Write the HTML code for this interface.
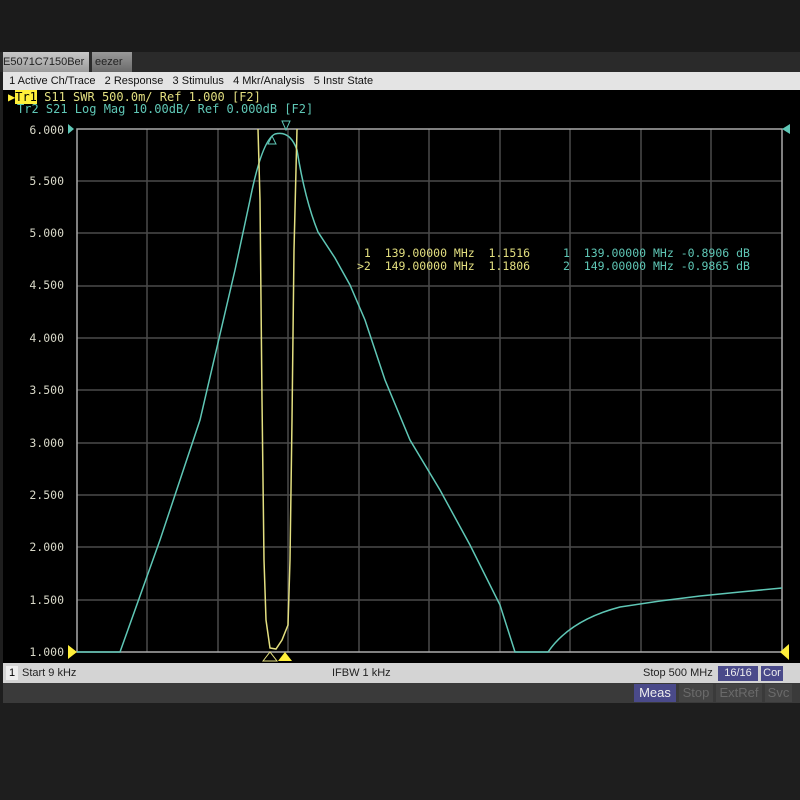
<!DOCTYPE html>
<html><head><style>
body{margin:0;width:800px;height:800px;background:#1e1e1e;overflow:hidden;font-family:"Liberation Sans",sans-serif;position:relative}
.a{position:absolute}
.mono{font-family:"DejaVu Sans Mono","Liberation Mono",monospace}
</style></head><body>
<div class="a" style="left:0;top:0;width:800px;height:52px;background:#1b1b1b"></div>
<div class="a" style="left:0;top:52px;width:800px;height:20px;background:#2a2a2a"></div>
<div class="a" style="left:3px;top:52px;width:86px;height:20px;background:linear-gradient(#c8c8c8,#9a9a9a);font-size:11px;color:#222;line-height:20px">E5071C7150Ber</div>
<div class="a" style="left:92px;top:52px;width:40px;height:20px;background:linear-gradient(#999,#6a6a6a);font-size:11px;color:#222;line-height:20px">&nbsp;eezer</div>
<div class="a" style="left:3px;top:72px;width:797px;height:18px;background:#e4e4e4;font-size:11px;color:#111;line-height:18px;white-space:pre">  1 Active Ch/Trace   2 Response   3 Stimulus   4 Mkr/Analysis   5 Instr State</div>
<div class="a" style="left:3px;top:90px;width:797px;height:573px;background:#000"></div>
<svg class="a" style="left:0;top:0" width="800" height="800">
<g stroke="#4a4a4a" stroke-width="1.5">
<line x1="147" y1="129" x2="147" y2="652"/><line x1="218" y1="129" x2="218" y2="652"/><line x1="288" y1="129" x2="288" y2="652"/><line x1="359" y1="129" x2="359" y2="652"/><line x1="429" y1="129" x2="429" y2="652"/><line x1="500" y1="129" x2="500" y2="652"/><line x1="570" y1="129" x2="570" y2="652"/><line x1="641" y1="129" x2="641" y2="652"/><line x1="711" y1="129" x2="711" y2="652"/>
<line x1="77" y1="181" x2="782" y2="181"/><line x1="77" y1="233" x2="782" y2="233"/><line x1="77" y1="286" x2="782" y2="286"/><line x1="77" y1="338" x2="782" y2="338"/><line x1="77" y1="390" x2="782" y2="390"/><line x1="77" y1="443" x2="782" y2="443"/><line x1="77" y1="495" x2="782" y2="495"/><line x1="77" y1="547" x2="782" y2="547"/><line x1="77" y1="600" x2="782" y2="600"/>
</g>
<rect x="77" y="129" width="705" height="523" fill="none" stroke="#aaa" stroke-width="1.5"/>
<path d="M77,652 L120,652 L160,540 L200,420 L235,270 L250,200 Q262,140 275,134 Q290,130 297,150 Q305,200 318,232 L335,258 L350,285 L365,320 L385,380 L410,440 L440,490 L470,545 L500,605 L515,652 L548,652 Q570,620 620,607 L660,601 L700,596 L740,592 L782,588" fill="none" stroke="#5fc7b6" stroke-width="1.5"/>
<path d="M258,129 L260,200 L262,400 L264,560 L266,620 L270,648 L276,649 L282,640 L288,625 L290,560 L292,420 L294,250 L297,129" fill="none" stroke="#e3df80" stroke-width="1.5"/>
<polygon points="68,124 74,129 68,134" fill="#5fc7b6"/>
<polygon points="68,645 77,652 68,659" fill="#ffef3a"/>
<polygon points="790,124 782,129 790,134" fill="#5fc7b6"/>
<polygon points="789,644 780,652 789,660" fill="#ffef3a"/>
<polygon points="278,661 285,652 292,661" fill="#ffef3a"/>
<polygon points="263,661 270,652 277,661" fill="none" stroke="#e3df80"/>
<polygon points="282,121 290,121 286,130" fill="none" stroke="#5fc7b6"/>
<polygon points="268,144 276,144 272,136" fill="none" stroke="#5fc7b6"/>
</svg>
<div class="a mono" style="left:8px;top:91px;font-size:12px;line-height:12px;white-space:pre"><span style="color:#ffef3a">▶</span><span style="background:#ffef3a;color:#000">Tr1</span><span style="color:#e3df80"> S11 SWR 500.0m/ Ref 1.000 [F2]</span></div>
<div class="a mono" style="left:17px;top:103px;font-size:12px;line-height:12px;white-space:pre;color:#5fc7b6">Tr2 S21 Log Mag 10.00dB/ Ref 0.000dB [F2]</div>
<div class="a mono" style="left:8px;top:122px;font-size:11.5px;color:#d8d8c8;line-height:16px;text-align:right;width:56px">6.000</div>
<div class="a mono" style="left:8px;top:174px;font-size:11.5px;color:#d8d8c8;text-align:right;width:56px">5.500</div>
<div class="a mono" style="left:8px;top:226px;font-size:11.5px;color:#d8d8c8;text-align:right;width:56px">5.000</div>
<div class="a mono" style="left:8px;top:278px;font-size:11.5px;color:#d8d8c8;text-align:right;width:56px">4.500</div>
<div class="a mono" style="left:8px;top:331px;font-size:11.5px;color:#d8d8c8;text-align:right;width:56px">4.000</div>
<div class="a mono" style="left:8px;top:383px;font-size:11.5px;color:#d8d8c8;text-align:right;width:56px">3.500</div>
<div class="a mono" style="left:8px;top:436px;font-size:11.5px;color:#d8d8c8;text-align:right;width:56px">3.000</div>
<div class="a mono" style="left:8px;top:488px;font-size:11.5px;color:#d8d8c8;text-align:right;width:56px">2.500</div>
<div class="a mono" style="left:8px;top:540px;font-size:11.5px;color:#d8d8c8;text-align:right;width:56px">2.000</div>
<div class="a mono" style="left:8px;top:593px;font-size:11.5px;color:#d8d8c8;text-align:right;width:56px">1.500</div>
<div class="a mono" style="left:8px;top:645px;font-size:11.5px;color:#d8d8c8;text-align:right;width:56px">1.000</div>
<div class="a mono" style="left:357px;top:247px;font-size:11.5px;line-height:13px;white-space:pre;color:#e3df80"> 1  139.00000 MHz  1.1516
&gt;2  149.00000 MHz  1.1806</div>
<div class="a mono" style="left:563px;top:247px;font-size:11.5px;line-height:13px;white-space:pre;color:#5fc7b6">1  139.00000 MHz -0.8906 dB
2  149.00000 MHz -0.9865 dB</div>
<div class="a" style="left:3px;top:663px;width:797px;height:20px;background:#d4d4d4"></div>
<div class="a" style="left:6px;top:666px;width:12px;height:14px;background:#eee;font-size:11px;line-height:14px;text-align:center">1</div>
<div class="a" style="left:22px;top:666px;font-size:11px;line-height:14px;color:#222">Start 9 kHz</div>
<div class="a" style="left:332px;top:666px;font-size:11px;line-height:14px;color:#222">IFBW 1 kHz</div>
<div class="a" style="left:643px;top:666px;font-size:11px;line-height:14px;color:#222">Stop 500 MHz</div>
<div class="a" style="left:718px;top:666px;width:40px;height:15px;background:#4a4a8a;color:#eee;font-size:11px;line-height:15px;text-align:center">16/16</div>
<div class="a" style="left:761px;top:666px;width:22px;height:15px;background:#4a4a8a;color:#eee;font-size:11px;line-height:15px;text-align:center">Cor</div>
<div class="a" style="left:3px;top:683px;width:797px;height:20px;background:#3a3a3a"></div>
<div class="a" style="left:634px;top:684px;width:42px;height:18px;background:#4a4a8a;color:#eee;font-size:13px;line-height:18px;text-align:center">Meas</div>
<div class="a" style="left:679px;top:684px;width:34px;height:18px;background:#444;color:#6a6a6a;font-size:13px;line-height:18px;text-align:center">Stop</div>
<div class="a" style="left:716px;top:684px;width:46px;height:18px;background:#444;color:#6a6a6a;font-size:13px;line-height:18px;text-align:center">ExtRef</div>
<div class="a" style="left:765px;top:684px;width:27px;height:18px;background:#444;color:#6a6a6a;font-size:13px;line-height:18px;text-align:center">Svc</div>
</body></html>
